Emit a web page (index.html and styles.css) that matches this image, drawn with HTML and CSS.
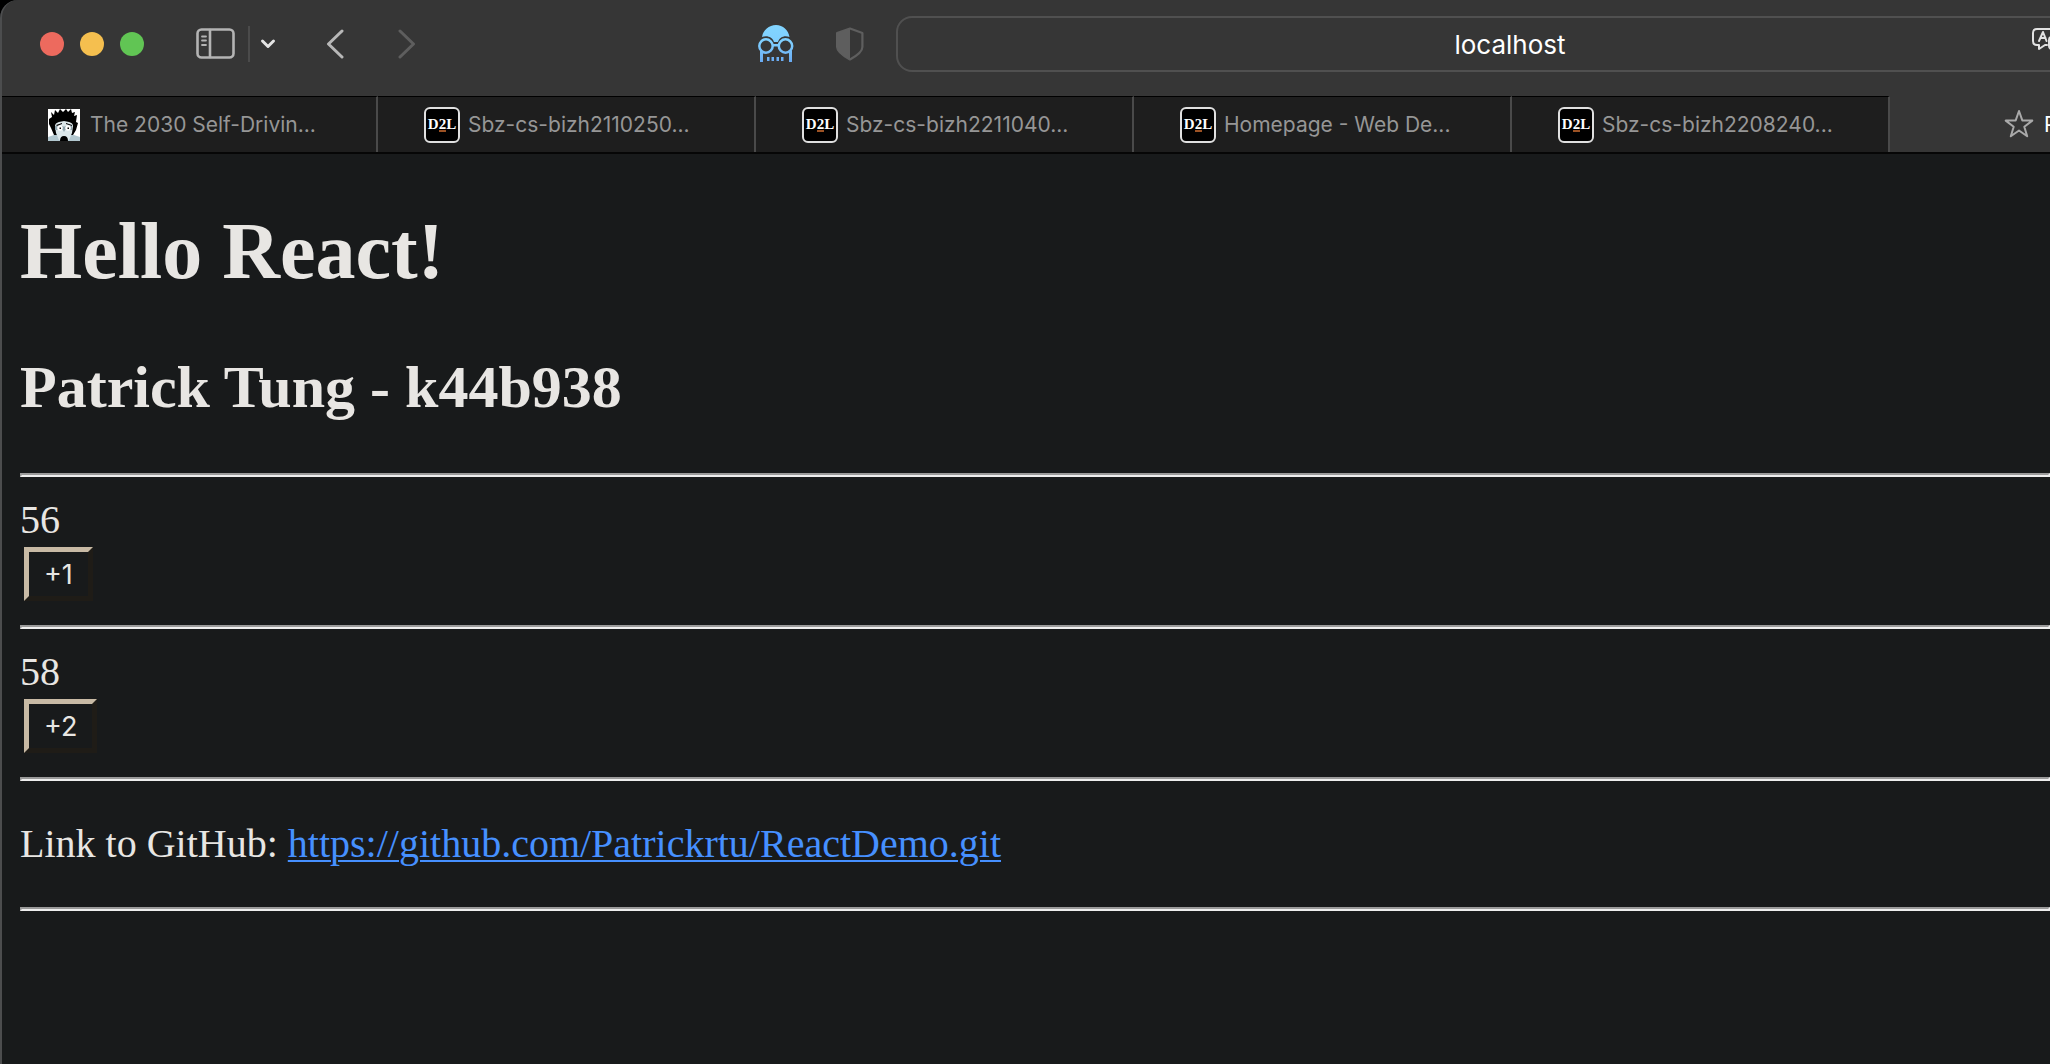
FILE: index.html
```
<!DOCTYPE html>
<html lang="en">
<head>
<meta charset="utf-8">
<title>React Demo</title>
<link rel="stylesheet" href="styles.css">
</head>
<body>
<div class="window">
  <header class="toolbar">
    <div class="lights">
      <button class="light light-close" aria-label="Close"></button>
      <button class="light light-minimize" aria-label="Minimize"></button>
      <button class="light light-zoom" aria-label="Zoom"></button>
    </div>
    <div class="sidebar-tools">
      <button class="tool" aria-label="Show sidebar">
        <svg width="42" height="32" viewBox="0 0 42 32" fill="none" stroke="#b4b4b4" stroke-width="2.6" stroke-linecap="round">
          <rect x="1.5" y="1.5" width="36" height="28" rx="4"/>
          <path d="M14 2v27"/><path d="M6 8.500h4M6 12.500h4M6 17h4" stroke-width="1.800"/>
        </svg>
      </button>
      <span class="tool-divider"></span>
      <button class="tool" aria-label="Tab groups">
        <svg width="16" height="12" viewBox="0 0 16 12" fill="none" stroke="#e4e4e4" stroke-width="3" stroke-linecap="round" stroke-linejoin="round"><path d="M2.500 3 8 8.500 13.500 3"/></svg>
      </button>
    </div>
    <nav class="history">
      <button class="tool" aria-label="Back">
        <svg width="18" height="30" viewBox="0 0 18 30" fill="none" stroke="#b8b8b8" stroke-width="3" stroke-linecap="round" stroke-linejoin="round"><path d="M16 2 2.500 15 16 28"/></svg>
      </button>
      <button class="tool" aria-label="Forward">
        <svg width="18" height="30" viewBox="0 0 18 30" fill="none" stroke="#5e5e5e" stroke-width="3" stroke-linecap="round" stroke-linejoin="round"><path d="M2 2 15.500 15 2 28"/></svg>
      </button>
    </nav>
    <div class="extensions">
      <button class="tool" aria-label="Dark Reader">
        <svg width="36" height="38" viewBox="0 0 36 38" fill="none">
          <defs><linearGradient id="mask-blue" gradientUnits="userSpaceOnUse" x1="0" y1="0" x2="0" y2="38"><stop offset="0" stop-color="#82d5ff"/><stop offset=".45" stop-color="#7fcfff"/><stop offset="1" stop-color="#68a8f2"/></linearGradient></defs>
          <path fill="url(#mask-blue)" d="M4 12C5 5 11 0 18 0s12.500 5 13.500 12c-5-2-10 0-11.500 5h-4C14.500 12 9 10 4 12Z"/>
          <g stroke="url(#mask-blue)" stroke-width="2.500"><circle cx="8" cy="21" r="6.700"/><circle cx="27.500" cy="21" r="6.700"/></g>
          <path fill="url(#mask-blue)" d="M14 19h8v2.500h-8zM2 25l3 2v10H2zM31 27l3-2v12h-3zM9 32h2.500v4H9zM13.500 32H16v4h-2.500zM18.500 32H21v4h-2.500zM23 32h2.500v4H23z"/>
        </svg>
      </button>
      <button class="tool" aria-label="Privacy report">
        <svg width="28" height="34" viewBox="0 0 28 34"><path fill="none" stroke="#5e5e5e" stroke-width="2.200" stroke-linejoin="round" d="M14 1.500 26.400 6v14c0 5-6 9-12.400 12.500C7.600 29 1.100 25 1.100 20V6Z"/><path fill="#5e5e5e" d="M14 1v32C7 29 1 25 1 20V6Z"/></svg>
      </button>
    </div>
    <div class="address">
      <input class="address-input" type="text" value="localhost" aria-label="Address">
      <button class="translate" aria-label="Translate">
        <svg width="32" height="26" viewBox="0 0 32 26" fill="none" stroke="#e2e2e2" stroke-width="2" stroke-linecap="round" stroke-linejoin="round"><path d="M15 17h-2l-6 4v-4H5q-4 0-4-4V5q0-4 4-4h15q4 0 4 4v2"/><path d="m7 13 4-9 3.500 9M8.500 10h5"/><rect x="17" y="9" width="14" height="12" rx="3"/></svg>
      </button>
    </div>
  </header>

  <nav class="tabs">
    <a class="tab" href="#">
      <span class="favicon">
        <svg width="32" height="32" viewBox="0 0 32 32">
          <path fill="#fff" d="M0 0h32v32H0z"/>
          <path fill="#b2c7cf" d="M0 28 6 26h20l6 2v4H0z"/>
          <path fill="#000" d="M1 10 4 8 3 3l3 3 1-5 3 3 2-4 3 3 3-3 2 3 3-3 1 4 3-1-1 4 3-1-1 7 2 1-2 7-3 5H6l-3-7-2-4Z"/>
          <path fill="#dce7ea" d="M7 17q0-3 4-4l5-1 5 1q4 1 4 4l-1 7-3 7H11l-3-7Z"/>
          <path fill="#8ca2ab" d="M7 17h8l1 1 1-1h7v4h-7l-1 2-1-2H7z"/>
          <circle cx="12" cy="19" r="2.800" fill="#fff"/><circle cx="20" cy="19" r="2.800" fill="#fff"/>
          <path fill="#000" d="m8 16 6-2v1l-5 2zM18 14l6 2v1l-6-2zM11.500 18.500h1.500V20h-1.500zM19.500 18.500H21V20h-1.500zM12 32q0-5 4-5t4 5z"/>
        </svg>
      </span>
      <span class="tab-title">The 2030 Self-Drivin...</span>
    </a>
    <a class="tab" href="#"><span class="favicon favicon-d2l">D<span class="d2l-two">2</span>L</span><span class="tab-title">Sbz-cs-bizh2110250...</span></a>
    <a class="tab" href="#"><span class="favicon favicon-d2l">D<span class="d2l-two">2</span>L</span><span class="tab-title">Sbz-cs-bizh2211040...</span></a>
    <a class="tab" href="#"><span class="favicon favicon-d2l">D<span class="d2l-two">2</span>L</span><span class="tab-title">Homepage - Web De...</span></a>
    <a class="tab" href="#"><span class="favicon favicon-d2l">D<span class="d2l-two">2</span>L</span><span class="tab-title">Sbz-cs-bizh2208240...</span></a>
    <a class="tab tab-active" href="#">
      <svg class="star" width="30" height="30" viewBox="0 0 30 30" fill="none" stroke="#aaa" stroke-width="2" stroke-linejoin="round"><path d="m15 2 3.300 9.400 10 .2-8 6.100 2.900 9.600-8.200-5.800-8.200 5.800 2.900-9.600-8-6.100 10-.2Z"/></svg>
      <span class="tab-title">P</span>
    </a>
  </nav>

  <main class="page">
    <h1>Hello React!</h1>
    <h2>Patrick Tung - k44b938</h2>
    <hr>
    <div class="counter">
      <output>56</output>
      <button class="step">+1</button>
    </div>
    <hr>
    <div class="counter">
      <output>58</output>
      <button class="step">+2</button>
    </div>
    <hr>
    <p>Link to GitHub: <a href="https://github.com/Patrickrtu/ReactDemo.git">https://github.com/Patrickrtu/ReactDemo.git</a></p>
    <hr>
  </main>
</div>
</body>
</html>
```
FILE: styles.css
```
* {
  box-sizing: border-box;
}

html {
  background: #000;
}

body {
  margin: 0;
}

.window {
  position: relative;
  min-height: 100vh;
  overflow: hidden;
  border-top-left-radius: 18px;
  background: #181a1b;
  font-family: Inter, "Liberation Sans", sans-serif;
}

/* Light edge of the browser window, over all of its content */
.window::after {
  content: "";
  position: absolute;
  inset: 0;
  border-left: 2px solid #4c4d4e;
  border-top-left-radius: 18px;
  pointer-events: none;
}

.toolbar {
  display: flex;
  align-items: center;
  height: 96px;
  padding: 0 0 8px 40px;
  background: #363636;
}

.lights {
  display: flex;
  gap: 16px;
  margin-right: 52px;
}

.light {
  width: 24px;
  height: 24px;
  padding: 0;
  border: 0;
  border-radius: 50%;
}

.light-close {
  background: #ed6a5e;
}

.light-minimize {
  background: #f5bf4f;
}

.light-zoom {
  background: #61c554;
}

.tool {
  display: flex;
  padding: 0;
  border: 0;
  background: none;
}

.sidebar-tools {
  display: flex;
  align-items: center;
  gap: 10px;
  margin-right: 50px;
}

.tool-divider {
  width: 2px;
  height: 36px;
  background: #4b4b4b;
}

.history {
  display: flex;
  gap: 54px;
  margin-right: 342px;
}

.extensions {
  display: flex;
  align-items: center;
  gap: 42px;
  margin-right: 32px;
}

/* The field runs on past the right edge of the window */
.address {
  display: flex;
  flex: 1;
  min-width: 0;
  height: 56px;
  margin-right: -74px;
  border: 2px solid #505050;
  border-radius: 16px;
}

.address-input {
  flex: 1;
  min-width: 0;
  padding: 0 0 0 90px;
  border: 0;
  outline: 0;
  background: none;
  color: #fff;
  font: 26px Inter, "Liberation Sans", sans-serif;
  text-align: center;
}

.translate {
  width: 90px;
  padding: 0 0 4px;
  border: 0;
  background: none;
  text-align: left;
}

.tabs {
  display: flex;
  height: 58px;
  border-bottom: 2px solid #060606;
}

.tab {
  display: flex;
  flex: none;
  align-items: center;
  gap: 8px;
  width: 378px;
  padding: 0 32px 0 46px;
  border-top: 1px solid #000;
  border-right: 2px solid #4a4a4a;
  background: #1e1e1e;
  color: #969696;
  font-size: 21px;
  text-decoration: none;
  white-space: nowrap;
}

.tab-active {
  flex: 1;
  gap: 10px;
  min-width: 0;
  padding: 0 0 0 114px;
  border: 0;
  background: #363636;
  color: #fff;
}

.star {
  flex: none;
}

.favicon {
  display: flex;
  flex: none;
  align-items: center;
  justify-content: center;
  width: 36px;
  height: 36px;
}

.favicon-d2l {
  border: 2px solid #e0e0e0;
  border-radius: 6px;
  background: #000;
  color: #fff;
  font: bold 15px "Liberation Serif", serif;
}

.d2l-two {
  border-bottom: 2px solid #9c5224;
  line-height: 12px;
}

.page {
  display: flow-root;
  padding-left: 20px;
  color: #e8e6e3;
  font: 40px/46px "Liberation Serif", serif;
}

h1 {
  margin: 51px 0 55px;
  font-size: 80px;
  line-height: 92px;
}

h2 {
  margin: 51px 0;
  font-size: 60px;
  line-height: 70px;
}

hr {
  height: 4px;
  margin: 20px 0;
  border: 2px solid;
  border-color: #9a9a9a #eee #eee #9a9a9a;
}

.counter {
  display: flow-root;
}

output {
  display: block;
}

.step {
  display: block;
  height: 54px;
  margin: 4px;
  padding: 0 15px;
  border: 5px solid;
  border-color: #c8baa5 #1f1c17 #1f1c17 #c8baa5;
  background: #181a1b;
  color: #e8e6e3;
  font: 27px Inter, "Liberation Sans", sans-serif;
}

p {
  margin: 40px 0;
}

p a {
  color: #4690ff;
  text-decoration-thickness: 2px;
  text-underline-offset: 3px;
}
```
